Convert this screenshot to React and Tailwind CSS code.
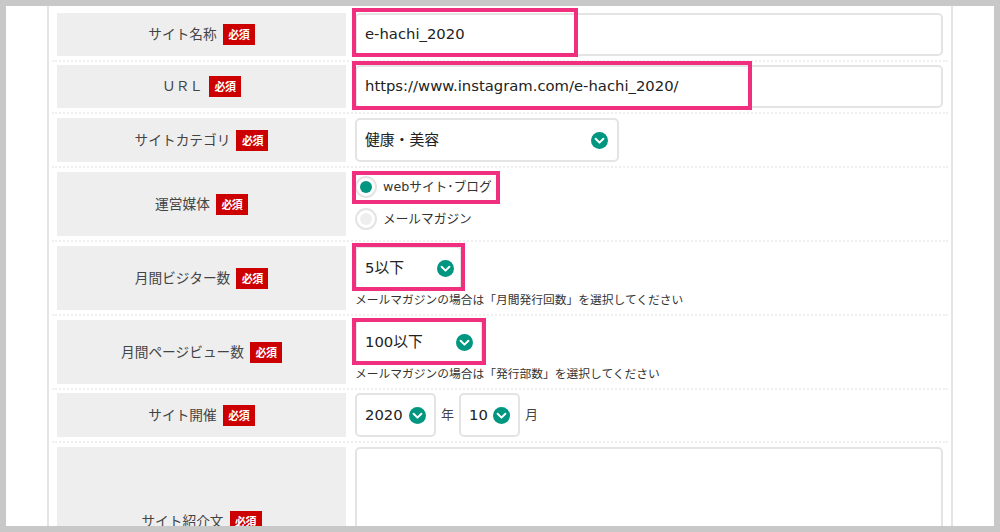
import React from 'react';

const jp = 'font-["DejaVu_Sans","Noto_Sans_CJK_JP",sans-serif]';
const labelFont = 'font-["Noto_Sans_CJK_JP","Noto_Sans",sans-serif]';

function Badge() {
  return (
    <span className={`ml-[6px] inline-flex h-[21px] w-[32px] items-center justify-center bg-[#cc0000] text-[11px] leading-none font-bold tracking-[-0.5px] text-white ${labelFont}`}>
      必須
    </span>
  );
}

function Chevron() {
  return (
    <svg className="h-[17px] w-[17px] shrink-0" viewBox="0 0 17 17">
      <circle cx="8.5" cy="8.5" r="8.5" fill="#009680" />
      <path d="M4.6 6.8 L8.5 10.6 L12.4 6.8" fill="none" stroke="#fff" strokeWidth="2" strokeLinecap="round" strokeLinejoin="round" />
    </svg>
  );
}

function Mark({ className }) {
  return <div className={`pointer-events-none absolute border-4 border-[#f0307f] ${className}`} />;
}

function Select({ className, children }) {
  return (
    <div className={`flex h-[44px] items-center justify-between rounded-[5px] border-2 border-[#e4e4e4] bg-white text-[14.8px] text-[#222] ${className}`}>
      {children}
      <Chevron />
    </div>
  );
}

function Row({ label, height, gap = 'mb-[4px]', children }) {
  return (
    <div className={`flex gap-[9px] border-b-2 border-dotted border-[#eeeeee] pb-[4px] pl-[5px] ${gap}`}>
      <div className={`flex w-[289px] shrink-0 items-center justify-center bg-[#eeeeee] text-[13.7px] text-[#444] ${labelFont} ${height}`}>
        <span className="mb-[2px]">{label}</span>
        <Badge />
      </div>
      <div className="relative flex-1 pr-[5px]">{children}</div>
    </div>
  );
}

function Note({ children }) {
  return <p className={`mt-[1px] text-[11.75px] leading-[16px] text-[#333] ${labelFont}`}>{children}</p>;
}

function Radio({ checked, children }) {
  return (
    <label className="flex items-center gap-[6px]">
      <span className="flex h-[22px] w-[22px] items-center justify-center rounded-full border-2 border-[#e4e4e4]">
        <span className={`h-[12px] w-[12px] rounded-full ${checked ? 'bg-[#009680]' : 'bg-[#eeeeee]'}`} />
      </span>
      {children}
    </label>
  );
}

export default function App() {
  return (
    <div className={`h-[532px] w-[1000px] overflow-hidden border-[6px] border-[#c8c8c8] bg-white ${jp}`}>
      <div className="mx-[41px] h-full border-x-2 border-[#e4e4e4] px-[3px] pt-[7px]">
        <Row label="サイト名称" height="h-[43px]" gap="mb-[3px]">
          <div className="flex h-[43px] items-center rounded-[5px] border-2 border-[#e4e4e4] pl-[8px] text-[14.8px] text-[#222]">e-hachi_2020</div>
          <Mark className="-top-[5px] -left-[3px] h-[49px] w-[226px]" />
        </Row>
        <Row label="ＵＲＬ" height="h-[43px]">
          <div className="flex h-[43px] items-center rounded-[5px] border-2 border-[#e4e4e4] pl-[8px] text-[14.8px] text-[#222]">https://www.instagram.com/e-hachi_2020/</div>
          <Mark className="-top-[4px] -left-[3px] h-[49px] w-[400px]" />
        </Row>
        <Row label="サイトカテゴリ" height="h-[44px]">
          <Select className="w-[264px] pr-[9px] pl-[8px]">健康・美容</Select>
        </Row>
        <Row label="運営媒体" height="h-[64px]">
          <div className="flex h-[64px] flex-col gap-[10px] pt-[4px] text-[12.7px] text-[#333]">
            <Radio checked>webサイト･ブログ</Radio>
            <Radio>メールマガジン</Radio>
          </div>
          <Mark className="-top-[1px] -left-[3px] h-[33px] w-[148px]" />
        </Row>
        <Row label="月間ビジター数" height="h-[64px]">
          <Select className="w-[107px] pr-[6px] pl-[8px]">5以下</Select>
          <Note>メールマガジンの場合は「月間発行回数」を選択してください</Note>
          <Mark className="-top-[3px] -left-[3px] h-[48px] w-[113px]" />
        </Row>
        <Row label="月間ページビュー数" height="h-[64px]" gap="mb-[3px]">
          <Select className="w-[128px] pr-[8px] pl-[8px]">100以下</Select>
          <Note>メールマガジンの場合は「発行部数」を選択してください</Note>
          <Mark className="-top-[2px] -left-[3px] h-[47px] w-[134px]" />
        </Row>
        <Row label="サイト開催" height="h-[44px]">
          <div className={`flex items-start text-[13px] text-[#444] ${labelFont}`}>
            <div className={jp}>
              <Select className="w-[81px] pr-[8px] pl-[8px]">2020</Select>
            </div>
            <span className="mx-[5px] mt-[11px]">年</span>
            <div className={jp}>
              <Select className="w-[61px] pr-[8px] pl-[8px]">10</Select>
            </div>
            <span className="mt-[11px] ml-[5px]">月</span>
          </div>
        </Row>
        <Row label="サイト紹介文" height="h-[148px]">
          <div className="h-[148px] rounded-[5px] border-2 border-[#e4e4e4]" />
        </Row>
      </div>
    </div>
  );
}
